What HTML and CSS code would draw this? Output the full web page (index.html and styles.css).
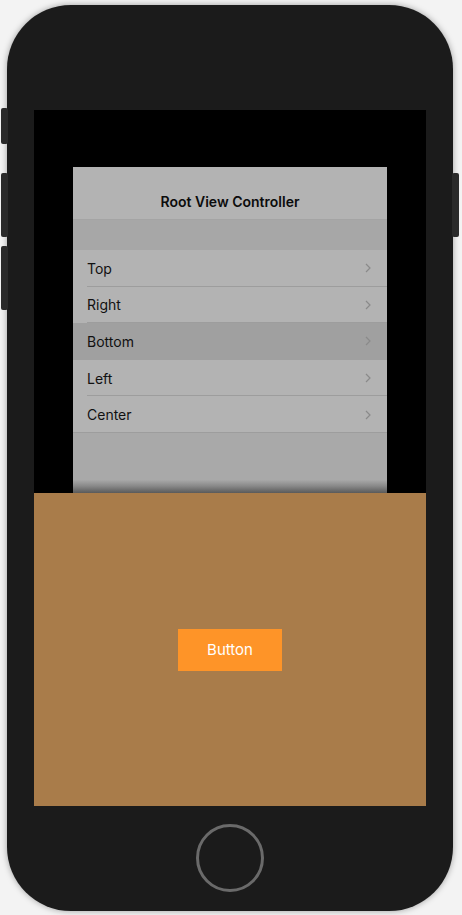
FILE: index.html
```html
<!DOCTYPE html>
<html>
<head>
<meta charset="utf-8">
<link rel="stylesheet" href="styles.css">
</head>
<body>
<div class="phone">
  <div class="btn-side mute"></div>
  <div class="btn-side vol-up"></div>
  <div class="btn-side vol-down"></div>
  <div class="btn-side power"></div>
  <div class="screen">
    <div class="backdrop">
      <div class="sheet">
        <div class="navbar"><span class="title">Root View Controller</span></div>
        <div class="section-header"></div>
        <ul class="list">
          <li class="row"><span>Top</span><svg class="chev" viewBox="0 0 6 10"><path d="M1 1l4 4-4 4"/></svg></li>
          <li class="row"><span>Right</span><svg class="chev" viewBox="0 0 6 10"><path d="M1 1l4 4-4 4"/></svg></li>
          <li class="row selected"><span>Bottom</span><svg class="chev" viewBox="0 0 6 10"><path d="M1 1l4 4-4 4"/></svg></li>
          <li class="row"><span>Left</span><svg class="chev" viewBox="0 0 6 10"><path d="M1 1l4 4-4 4"/></svg></li>
          <li class="row"><span>Center</span><svg class="chev" viewBox="0 0 6 10"><path d="M1 1l4 4-4 4"/></svg></li>
        </ul>
        <div class="filler"></div>
      </div>
    </div>
    <div class="panel">
      <div class="action">Button</div>
    </div>
  </div>
  <div class="home"></div>
</div>
</body>
</html>
```

FILE: styles.css
```css
html, body {
  margin: 0;
  padding: 0;
}
body {
  width: 462px;
  height: 915px;
  background: #f3f3f3;
  overflow: hidden;
  font-family: Inter, "Liberation Sans", Arial, sans-serif;
}
.phone {
  position: relative;
  margin: 5px 0 0 7px;
  width: 446px;
  height: 906px;
  border-radius: 64px;
  background: #1b1b1b;
  box-shadow: 0 0 6px rgba(0,0,0,0.35);
  display: flex;
  flex-direction: column;
  align-items: center;
}
.btn-side {
  position: absolute;
  width: 7px;
  background: #2a2a2a;
  border-radius: 2px;
}
.mute { left: -6px; top: 103px; height: 36px; }
.vol-up { left: -6px; top: 168px; height: 64px; }
.vol-down { left: -6px; top: 241px; height: 64px; }
.power { right: -6px; top: 168px; height: 64px; }
.screen {
  margin-top: 105px;
  width: 392px;
  height: 696px;
  background: #000;
  display: flex;
  flex-direction: column;
}
.backdrop {
  height: 383px;
  padding: 57px 39px 0;
  box-sizing: border-box;
  display: flex;
}
.sheet {
  flex: 1;
  display: flex;
  flex-direction: column;
  background: #a9a9a9;
}
.navbar {
  height: 53px;
  box-sizing: border-box;
  padding-top: 17px;
  background: #b3b3b3;
  border-bottom: 1px solid #a4a4a4;
  display: flex;
  justify-content: center;
}
.title {
  height: 36px;
  line-height: 36px;
  font-size: 14px;
  font-weight: 600;
  color: #0c0c0c;
}
.section-header {
  height: 30px;
  background: #a7a7a7;
}
.list {
  list-style: none;
  margin: 0;
  padding: 0;
  background: #b3b3b3;
}
.row {
  height: 36.6px;
  margin-left: 14px;
  padding-right: 16px;
  display: flex;
  align-items: center;
  justify-content: space-between;
  font-size: 14px;
  color: #111;
  box-shadow: inset 0 -1px 0 #9d9d9d;
}
.row.selected {
  margin-left: 0;
  padding-left: 14px;
  background: #a0a0a0;
  box-shadow: none;
}
.row:last-child {
  margin-left: 0;
  padding-left: 14px;
}
.chev {
  width: 6px;
  height: 10px;
  fill: none;
  stroke: #8a8a8a;
  stroke-width: 1.2;
}
.filler {
  flex: 1;
  background: linear-gradient(to bottom, #a9a9a9 0, #a9a9a9 78%, #8a8a8a 88%, #5a5a5a 100%);
}
.panel {
  flex: 1;
  background: #a97c4a;
  display: flex;
  align-items: center;
  justify-content: center;
}
.action {
  width: 104px;
  height: 42px;
  background: #fe9428;
  color: #fff;
  font-size: 15px;
  display: flex;
  align-items: center;
  justify-content: center;
}
.home {
  margin-top: 18px;
  width: 62px;
  height: 62px;
  border-radius: 50%;
  border: 3px solid #6a6a6a;
}
```
